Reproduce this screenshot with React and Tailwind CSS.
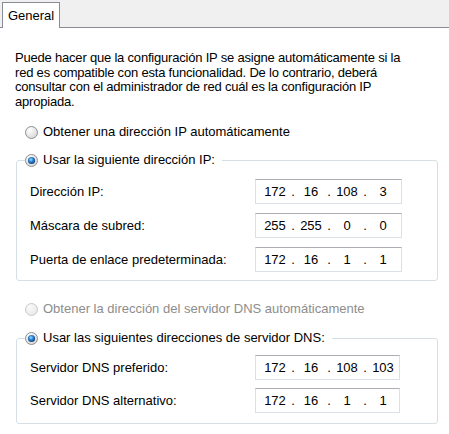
import React from 'react'

const font = { fontFamily: '"Liberation Sans", Arial, sans-serif' }

function Radio({ checked, disabled }) {
  return (
    <svg width="13" height="13" viewBox="0 0 13 13" className="shrink-0">
      <defs>
        <radialGradient id="rb-fill" cx="0.35" cy="0.3" r="0.85">
          <stop offset="0" stopColor="#ffffff" />
          <stop offset="1" stopColor="#d2d2d2" />
        </radialGradient>
        <radialGradient id="rb-fill-off" cx="0.35" cy="0.3" r="0.85">
          <stop offset="0" stopColor="#fafafa" />
          <stop offset="1" stopColor="#e6e6e6" />
        </radialGradient>
        <radialGradient id="rb-dot" cx="0.42" cy="0.38" r="0.7">
          <stop offset="0" stopColor="#9fe0ff" />
          <stop offset="0.45" stopColor="#2a7fd0" />
          <stop offset="1" stopColor="#0b2f66" />
        </radialGradient>
      </defs>
      <circle
        cx="6.5"
        cy="6.5"
        r="6"
        fill={disabled ? 'url(#rb-fill-off)' : 'url(#rb-fill)'}
        stroke={disabled ? '#c9c9c9' : '#8e8f8f'}
        strokeWidth="1"
      />
      {checked && <circle cx="6.5" cy="6.5" r="3.6" fill="url(#rb-dot)" />}
    </svg>
  )
}

function IpField({ parts, width }) {
  return (
    <div className={`flex h-[25px] items-center border border-[#dbdfe6] border-t-[#abadb3] bg-white pl-[3px] ${width}`}>
      {parts.map((p, i) => (
        <React.Fragment key={i}>
          {i > 0 && <span className="w-[4px] text-center">.</span>}
          <span className="w-[32px] text-center">{p}</span>
        </React.Fragment>
      ))}
    </div>
  )
}

function Row({ label, parts, width, className = '' }) {
  return (
    <div className={`flex items-center pl-[13px] ${className}`}>
      <span className="w-[225px] whitespace-nowrap">{label}</span>
      <IpField parts={parts} width={width} />
    </div>
  )
}

export default function App() {
  return (
    <div className="h-[434px] w-[449px] overflow-hidden bg-white text-[13px] leading-[14px] text-black" style={font}>
      {/* Tab strip */}
      <div className="flex h-[28px] items-end border-b border-[#898c95] bg-[#f0f0f0] pl-[2px]">
        <div className="-mb-px flex h-[26px] w-[58px] items-center justify-center border border-b-0 border-[#898c95] bg-white">
          General
        </div>
      </div>

      <div className="pl-[16px] pr-[11px]">
        <p className="-ml-px mt-[23px] whitespace-nowrap leading-[14.5px] tracking-[-0.2px]">
          Puede hacer que la configuración IP se asigne automáticamente si la
          <br />
          red es compatible con esta funcionalidad. De lo contrario, deberá
          <br />
          consultar con el administrador de red cuál es la configuración IP
          <br />
          apropiada.
        </p>

        <div className="mt-[15px] flex h-[16px] items-center gap-[5px] pl-[9px]">
          <Radio />
          <span>Obtener una dirección IP automáticamente</span>
        </div>

        <fieldset className="mt-[12px] rounded-[3px] border border-[#d5dfe5] pb-[8px]">
          <legend className="ml-[8px] pr-[7px]">
            <span className="flex h-[16px] items-center gap-[5px]">
              <Radio checked />
              <span>Usar la siguiente dirección IP:</span>
            </span>
          </legend>
          <Row className="mt-[11px]" label="Dirección IP:" parts={['172', '16', '108', '3']} width="w-[147px]" />
          <Row className="mt-[9px]" label="Máscara de subred:" parts={['255', '255', '0', '0']} width="w-[147px]" />
          <Row className="mt-[9px]" label="Puerta de enlace predeterminada:" parts={['172', '16', '1', '1']} width="w-[147px]" />
        </fieldset>

        <div className="mt-[20px] flex h-[16px] items-center gap-[5px] pl-[9px] text-[#8d8d8d]">
          <Radio disabled />
          <span>Obtener la dirección del servidor DNS automáticamente</span>
        </div>

        <fieldset className="mt-[13px] rounded-[3px] border border-[#d5dfe5] pb-[10px]">
          <legend className="ml-[8px] pr-[7px]">
            <span className="flex h-[16px] items-center gap-[5px]">
              <Radio checked />
              <span>Usar las siguientes direcciones de servidor DNS:</span>
            </span>
          </legend>
          <Row className="mt-[9px]" label="Servidor DNS preferido:" parts={['172', '16', '108', '103']} width="w-[145px]" />
          <Row className="mt-[8px]" label="Servidor DNS alternativo:" parts={['172', '16', '1', '1']} width="w-[145px]" />
        </fieldset>
      </div>
    </div>
  )
}
